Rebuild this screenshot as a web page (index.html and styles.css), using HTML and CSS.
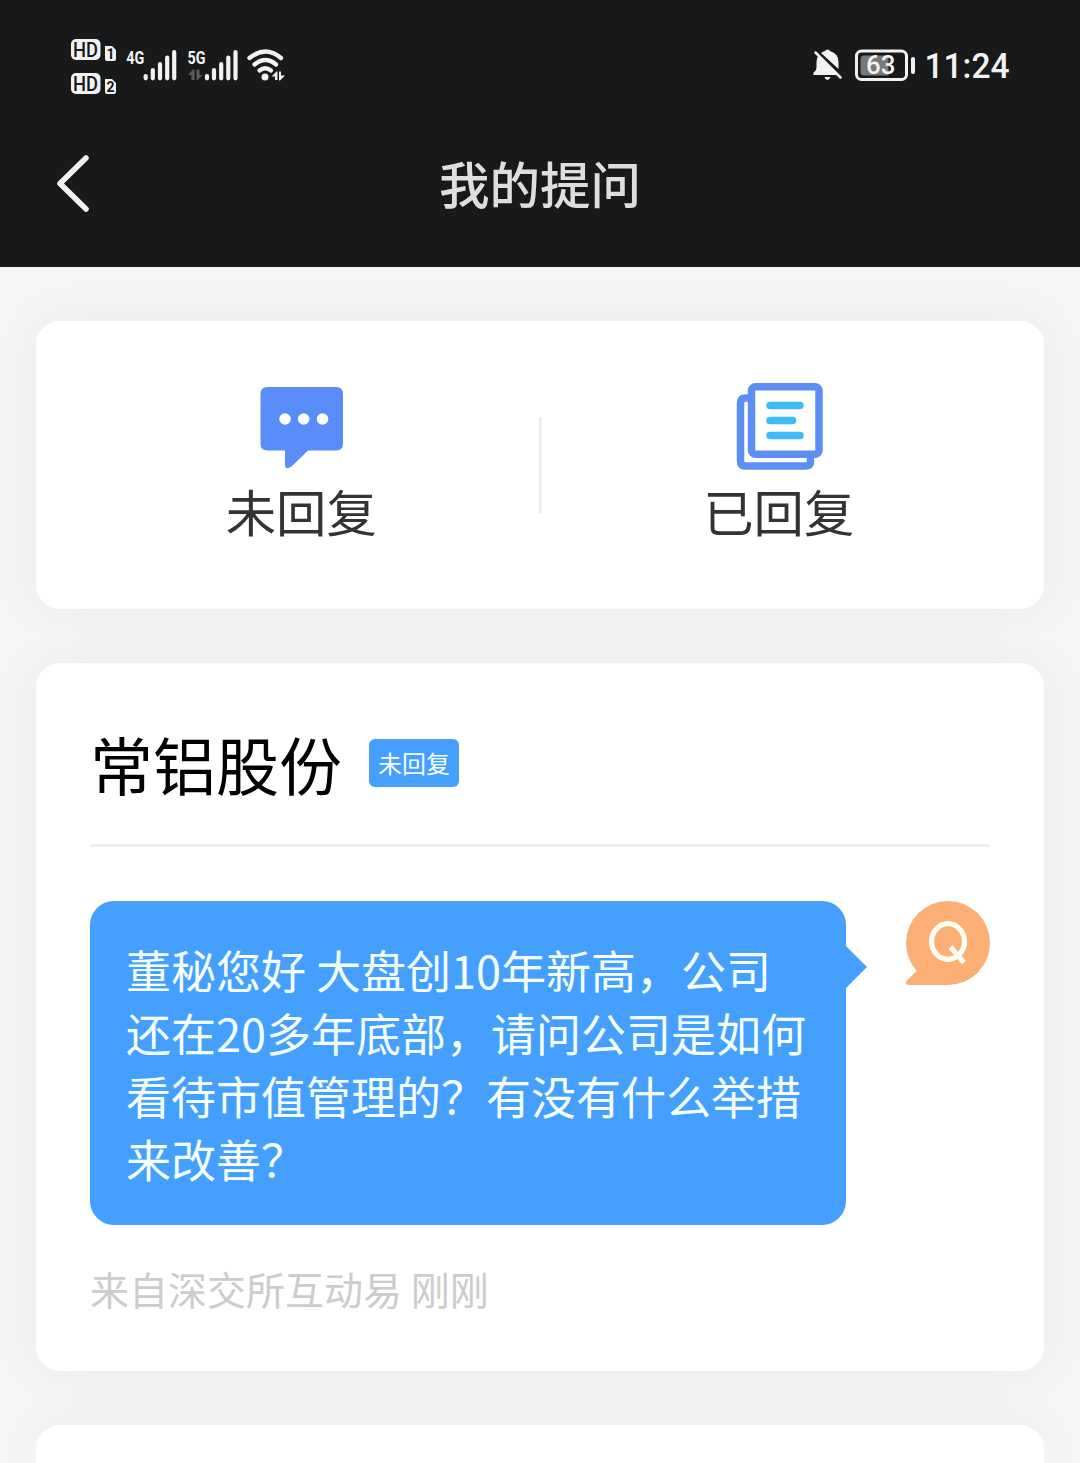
FILE: index.html
```html
<!DOCTYPE html>
<html lang="zh-CN">
<head>
<meta charset="utf-8">
<title>我的提问</title>
<link rel="stylesheet" href="styles.css">
</head>
<body>
<header class="header">
  <div class="status">
    <svg class="status-left" viewBox="60 30 240 75" width="240" height="75">
      <g fill="#f2f2f2">
        <rect x="71" y="39" width="29.5" height="21" rx="5"/>
        <rect x="71" y="73" width="29.5" height="21" rx="5"/>
        <path d="M105 46h7l4 4v9q0 2-2 2h-7q-2 0-2-2z"/>
        <path d="M105 79h7l4 4v9q0 2-2 2h-7q-2 0-2-2z"/>
      </g>
      <g class="hd">
        <text x="73" y="56.500" textLength="25" lengthAdjust="spacingAndGlyphs">HD</text>
        <text x="73" y="90.500" textLength="25" lengthAdjust="spacingAndGlyphs">HD</text>
      </g>
      <text class="sim" x="110.500" y="58.500">1</text>
      <text class="sim" x="110.500" y="91.700">2</text>
      <text class="net" x="126.300" y="63.500" textLength="18" lengthAdjust="spacingAndGlyphs">4G</text>
      <text class="net" x="187.500" y="63.500" textLength="18" lengthAdjust="spacingAndGlyphs">5G</text>
      <g stroke="#f2f2f2" stroke-width="4.200" stroke-linecap="round">
        <path d="M145.700 76v2.300M152.800 70v8.300M160 64v14.300M167.200 57.500v20.800M174.200 52v26.300"/>
        <path d="M207 76v2.300M214 70v8.300M221.200 64v14.300M228.300 57.500v20.800M235.500 52v26.300"/>
      </g>
      <path fill="#5a5b5c" d="M188 75l5-5.500h1.500V80h-3v-5zM196.500 69.500h3V75h3L197.500 80h-1z"/>
      <g fill="none" stroke="#f2f2f2" stroke-width="4.300" stroke-linecap="round">
        <path d="M249.500 58Q265.500 45 281 58"/>
        <path d="M254.500 64.500Q265.500 55.500 276 64.500"/>
        <path d="M259.500 70.500Q265.300 66 271 70.500"/>
      </g>
      <circle cx="265" cy="77" r="3.500" fill="#f2f2f2"/>
      <path fill="#f2f2f2" d="M271.500 76.500l5-5h1V80h-2.500v-3.500zM279 71.500h2v4h4L280 80.500h-1z"/>
    </svg>
    <svg class="status-right" viewBox="800 35 220 60" width="220" height="60">
      <path fill="#f2f2f2" d="M813.500 75v-2.500q3-2 3-5.500v-5q0-4 2-6.800L838.500 75zM821 53q2-1.500 4-2 .5-1.500 2.500-1.500t2.500 1.500q8.500 2.500 8.500 11v7zM824.500 77h6q-.8 3-3 3t-3-3z"/>
      <path d="M815.500 52.500L840.500 77.500" stroke="#f2f2f2" stroke-width="2.500" stroke-linecap="round"/>
      <rect x="856.500" y="51" width="50" height="28.500" rx="5" fill="none" stroke="#f2f2f2" stroke-width="3"/>
      <path d="M864 55.500h24.500v20H864q-3.500 0-3.500-3.500v-13q0-3.500 3.500-3.500z" fill="#77787a"/>
      <rect x="911" y="57" width="4" height="17" rx="2" fill="#f2f2f2"/>
      <text class="battery" x="866" y="74" textLength="29.500" lengthAdjust="spacingAndGlyphs">63</text>
      <text class="time" x="924.500" y="78" textLength="85" lengthAdjust="spacingAndGlyphs">11:24</text>
    </svg>
  </div>
  <div class="nav">
    <svg class="back" viewBox="0 0 40 64" width="40" height="64"><path d="M34 6L8 31.500L34 57" fill="none" stroke="#f2f2f2" stroke-width="5.500" stroke-linecap="round" stroke-linejoin="round"/></svg>
    <h1 class="nav-title">我的提问</h1>
  </div>
</header>
<main class="content">
  <section class="card tabs">
    <div class="tab">
      <svg viewBox="-1 0 90 90" width="90" height="90">
        <path fill="#588cf8" d="M10.500 6H79q7 0 7 7V62.500q0 7-7 7H51L34.500 85.500Q28 90 28 83V69.500H10.500q-7 0-7-7V13q0-7 7-7z"/>
        <g fill="#fff"><circle cx="28" cy="38" r="5.800"/><circle cx="46.700" cy="38" r="5.800"/><circle cx="65.500" cy="38" r="5.800"/></g>
      </svg>
      <span class="tab-label">未回复</span>
    </div>
    <div class="divider"></div>
    <div class="tab">
      <svg viewBox="0 0 90 90" width="90" height="90">
        <g fill="none" stroke="#5d8ff2" stroke-width="7.500">
          <path d="M16.500 17H11.500q-5 0-5 5v58q0 5 5 5h60q5 0 5-5V75"/>
          <rect x="17.500" y="5.800" width="67.500" height="67.500" rx="4"/>
        </g>
        <path d="M36 24.500h30M36 39.500h22.500M36 54.500h30" stroke="#41bbf5" stroke-width="7.500" stroke-linecap="round"/>
      </svg>
      <span class="tab-label">已回复</span>
    </div>
  </section>
  <article class="card question">
    <div class="question-head">
      <h2 class="company">常铝股份</h2>
      <span class="tag">未回复</span>
    </div>
    <div class="message">
      <p class="bubble">董秘您好 大盘创10年新高，公司还在20多年底部，请问公司是如何看待市值管理的？有没有什么举措来改善？</p>
      <svg class="avatar" viewBox="0 0 84 84" width="84" height="84">
        <circle cx="42" cy="42" r="42" fill="#fcaf74"/>
        <path fill="#fcaf74" d="M42 84H3Q0 84 0 81.500Q0 80.500 1 79.500L10.700 70L42 42z"/>
        <g fill="none" stroke="#fffdf5" stroke-width="5.200"><ellipse cx="42" cy="40.500" rx="16.500" ry="17.800"/><path d="M44.500 46L58 61.500"/></g>
      </svg>
    </div>
    <p class="meta">来自深交所互动易 刚刚</p>
  </article>
  <article class="card next"></article>
</main>
</body>
</html>
```

FILE: styles.css
```css
* { box-sizing: border-box; }

body {
  margin: 0;
  background: #f5f5f5;
  font-family: "Noto Sans CJK SC", sans-serif;
}

h1, h2, p { margin: 0; font-weight: 400; }

svg { display: block; flex: none; }

.header {
  height: 267px;
  background: #18191b;
}

.status {
  display: flex;
  justify-content: space-between;
  height: 105px;
  padding: 30px 60px 0;
}

.status-right { margin-top: 5px; }

.hd { font: 500 20px Roboto, sans-serif; fill: #18191b; }
.sim { font: 700 14px Roboto, sans-serif; fill: #18191b; text-anchor: middle; }
.net { font: 700 19px Roboto, sans-serif; fill: #f2f2f2; }
.battery { font: 500 26px Roboto, sans-serif; fill: #f2f2f2; }
.time { font: 500 35px Roboto, sans-serif; fill: #f2f2f2; }

.nav {
  display: grid;
  grid-template-columns: 100px 1fr 100px;
  align-items: center;
  height: 158px;
}

.back { margin-left: 52px; }

.nav-title {
  padding-bottom: 4px;
  text-align: center;
  font-size: 50.5px;
  line-height: 74px;
  font-weight: 500;
  color: #dedede;
}

.content {
  display: flex;
  flex-direction: column;
  gap: 54px;
  padding: 54px 36px 0;
}

.card {
  background: #fff;
  border-radius: 24px;
  box-shadow: 0 0 54px rgba(0, 0, 0, 0.045);
}

.tabs {
  display: grid;
  grid-template-columns: 1fr 3px 1fr;
  height: 288px;
}

.tab {
  display: flex;
  flex-direction: column;
  align-items: center;
  padding-top: 60px;
}

.tab:first-child { padding-left: 28px; }
.tab:last-child { padding-right: 28px; }

.tab-label {
  margin-top: 3px;
  font-size: 50.400px;
  line-height: 74px;
  color: #333;
}

.divider {
  height: 96px;
  margin-top: 96px;
  background: #eee;
}

.question {
  height: 708px;
  padding: 0 54px;
}

.question-head {
  display: flex;
  align-items: center;
  gap: 27px;
  height: 184px;
  padding-top: 18px;
  border-bottom: 3px solid #eee;
}

.company {
  font-size: 63px;
  line-height: 90px;
  color: #000;
}

.tag {
  width: 90px;
  height: 48px;
  border-radius: 6px;
  background: #459fff;
  color: #f5ffff;
  font-size: 24px;
  line-height: 48px;
  text-align: center;
}

.message {
  display: flex;
  justify-content: space-between;
  margin-top: 54px;
}

.bubble {
  position: relative;
  width: 756px;
  height: 324px;
  padding: 37px 36px 35px;
  border-radius: 24px;
  background: #459fff;
  color: #f5ffff;
  font-size: 45px;
  line-height: 63px;
}

.bubble::after {
  content: "";
  position: absolute;
  left: 100%;
  top: 45px;
  border: 21px solid transparent;
  border-left-color: #459fff;
  border-right: 0;
}

.meta {
  margin-top: 34px;
  font-size: 39px;
  line-height: 58px;
  color: #ccc;
}

.next {
  height: 38px;
  border-radius: 24px 24px 0 0;
}
```
